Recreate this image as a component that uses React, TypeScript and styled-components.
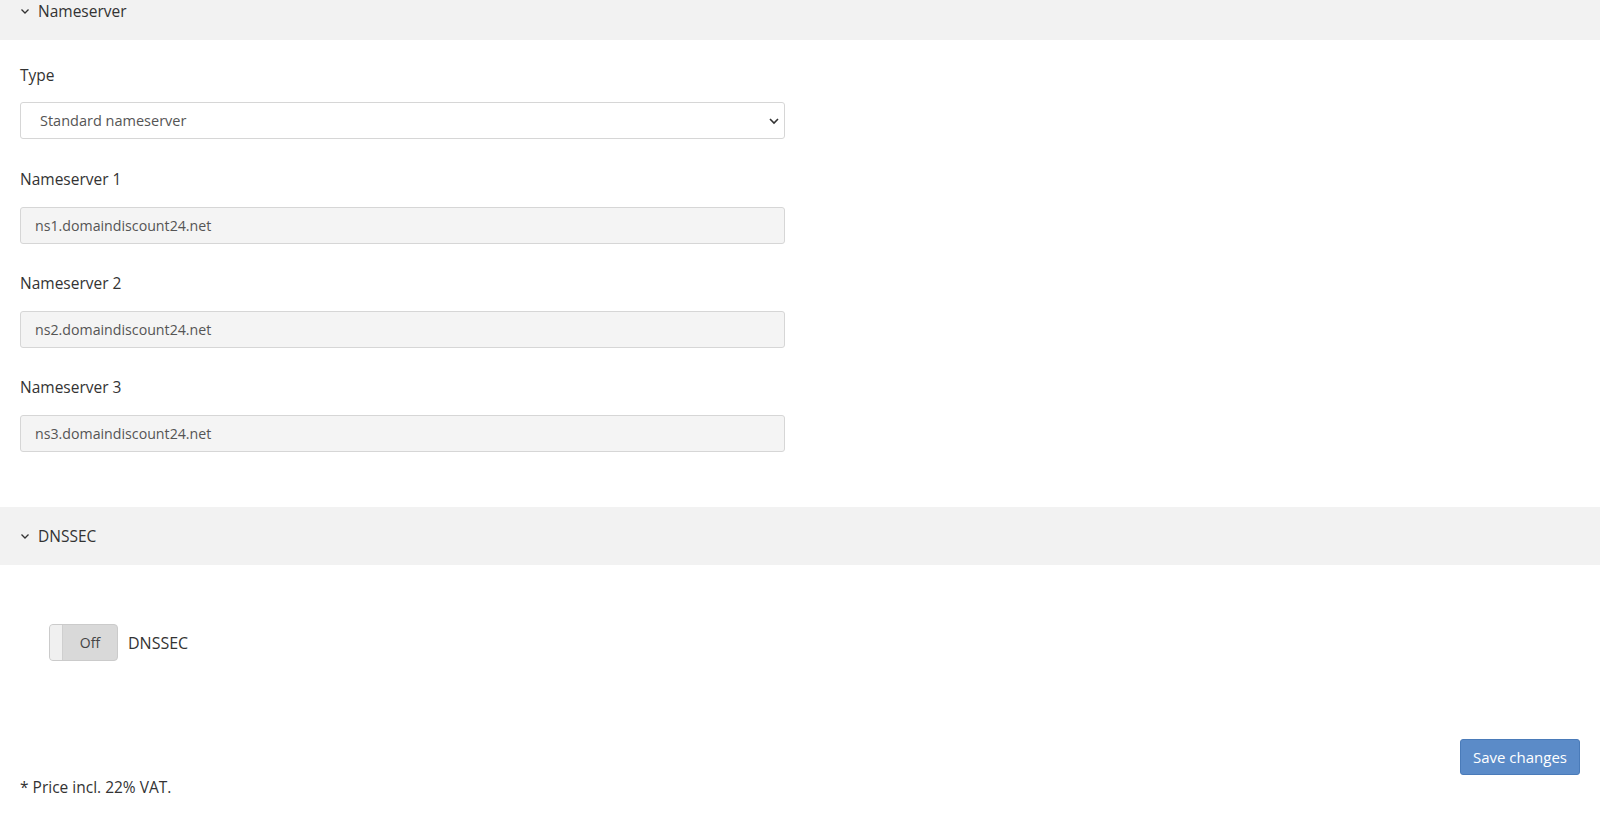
import React from 'react';
import styled, { createGlobalStyle } from 'styled-components';

const GlobalStyle = createGlobalStyle`
  body {
    margin: 0;
    background: #fff;
    font-family: "Open Sans", "Noto Sans", sans-serif;
    color: #333;
  }
  * { box-sizing: border-box; }
`;

const Page = styled.div`
  width: 1600px;
  min-height: 835px;
  display: flex;
  flex-direction: column;
`;

const SectionHeader = styled.div<{ $h: number }>`
  height: ${({ $h }) => $h}px;
  background: #f2f2f2;
  display: flex;
  align-items: center;
  gap: 8px;
  padding-left: 20px;
  font-size: 15.5px;
  color: #333;
`;

const TopHeader = styled(SectionHeader)`
  align-items: flex-start;
  line-height: 22px;
`;

const ChevronWrap = styled.span`
  display: flex;
  align-items: center;
  height: 22px;
`;

const Chevron = () => (
  <svg width="10" height="10" viewBox="0 0 10 10" fill="none" stroke="#333" strokeWidth="1.3">
    <path d="M1.5 3.5 L5 7 L8.5 3.5" />
  </svg>
);

const Body = styled.div`
  padding: 23px 20px 0;
  width: 805px;
  display: flex;
  flex-direction: column;
`;

const Field = styled.div<{ $mb: number }>`
  display: flex;
  flex-direction: column;
  margin-bottom: ${({ $mb }) => $mb}px;
`;

const Label = styled.label<{ $mb?: number }>`
  font-size: 15.5px;
  line-height: 24px;
  color: #333;
  margin-bottom: ${({ $mb }) => $mb ?? 16}px;
`;

const SelectBox = styled.div`
  height: 37px;
  border: 1px solid #d6d6d6;
  border-radius: 3px;
  background: #fff;
  display: flex;
  align-items: center;
  justify-content: space-between;
  padding: 0 4px 0 19px;
  font-size: 14.5px;
  color: #555;
`;

const Input = styled.input`
  height: 37px;
  border: 1px solid #d6d6d6;
  border-radius: 3px;
  background: #f4f4f4;
  padding: 0 14px;
  font-family: inherit;
  font-size: 14.2px;
  color: #555;
  outline: none;
`;

const DnssecHeader = styled(SectionHeader)`
  margin-top: 28px;
`;

const DnssecBody = styled.div`
  padding: 59px 49px 0;
  display: flex;
  align-items: center;
  gap: 10px;
  font-size: 16px;
`;

const Toggle = styled.div`
  width: 69px;
  height: 37px;
  border: 1px solid #cbcbcb;
  border-radius: 4px;
  background: #d9d9d9;
  display: flex;
  overflow: hidden;
`;

const Knob = styled.div`
  width: 13px;
  background: #f0f0f0;
  border-right: 1px solid #cfcfcf;
`;

const ToggleText = styled.div`
  flex: 1;
  display: flex;
  align-items: center;
  justify-content: center;
  font-size: 14px;
  color: #444;
`;

const Footer = styled.div`
  display: flex;
  justify-content: space-between;
  align-items: flex-start;
  padding: 78px 20px 0 20px;
`;

const Note = styled.div`
  font-size: 15.5px;
  line-height: 24px;
  margin-top: 36px;
  color: #333;
`;

const SaveButton = styled.button`
  width: 120px;
  height: 36px;
  background: #5b8bc8;
  border: 1px solid #4a7bb9;
  border-radius: 3px;
  color: #fff;
  font-family: inherit;
  font-size: 15px;
  cursor: pointer;
`;

const nameservers = ['ns1.domaindiscount24.net', 'ns2.domaindiscount24.net', 'ns3.domaindiscount24.net'];

export default function App() {
  return (
    <Page>
      <GlobalStyle />
      <TopHeader $h={40}>
        <ChevronWrap><Chevron /></ChevronWrap>
        Nameserver
      </TopHeader>
      <Body>
        <Field $mb={28}>
          <Label $mb={15}>Type</Label>
          <SelectBox>
            Standard nameserver
            <svg width="12" height="12" viewBox="0 0 12 12" fill="none" stroke="#333" strokeWidth="1.6">
              <path d="M2 4 L6 8 L10 4" />
            </svg>
          </SelectBox>
        </Field>
        {nameservers.map((ns, i) => (
          <Field key={ns} $mb={27}>
            <Label>Nameserver {i + 1}</Label>
            <Input readOnly value={ns} />
          </Field>
        ))}
      </Body>
      <DnssecHeader $h={58}>
        <Chevron />
        DNSSEC
      </DnssecHeader>
      <DnssecBody>
        <Toggle>
          <Knob />
          <ToggleText>Off</ToggleText>
        </Toggle>
        DNSSEC
      </DnssecBody>
      <Footer>
        <Note>* Price incl. 22% VAT.</Note>
        <SaveButton>Save changes</SaveButton>
      </Footer>
    </Page>
  );
}
